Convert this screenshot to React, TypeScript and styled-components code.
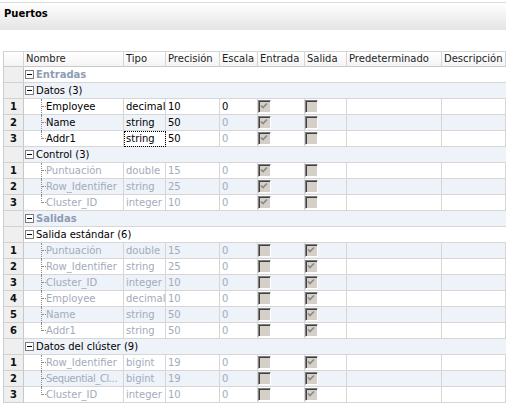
import React from 'react';
import styled, { createGlobalStyle } from 'styled-components';

const GlobalStyle = createGlobalStyle`
  html, body {
    margin: 0;
    padding: 0;
    background: #ffffff;
  }
  body {
    font-family: "DejaVu Sans", Verdana, sans-serif;
    font-size: 10px;
    color: #000;
    overflow: hidden;
  }
`;

const COLUMNS = '20px 100px 42px 54px 38px 47px 42px 95px 1fr';

const Panel = styled.div`
  width: 506px;
  height: 405px;
  overflow: hidden;
`;

const TitleBar = styled.div`
  margin-top: 2px;
  height: 28px;
  border-top: 1px solid #dcdcdc;
  background: linear-gradient(#ffffff, #e4e4e4);
  padding: 5px 0 0 4px;
  box-sizing: border-box;
`;

const Title = styled.div`
  font-weight: bold;
  line-height: 12px;
  color: #000;
`;

const Grid = styled.div`
  margin: 21px 0 0 3px;
  border-top: 1px solid #d6d6d6;
  border-left: 1px solid #cfcfcf;
`;

const HeaderRow = styled.div`
  display: grid;
  grid-template-columns: ${COLUMNS};
  height: 15px;
  background: linear-gradient(#ffffff, #f3f3f3);
`;

const HeaderCell = styled.div`
  height: 15px;
  box-sizing: border-box;
  border-right: 1px solid #d5d5d5;
  border-bottom: 1px solid #c9c9c9;
  padding-left: 2px;
  line-height: 14px;
  color: #1e1e1e;
  white-space: nowrap;
  overflow: hidden;
`;

const Row = styled.div<{ $alt: boolean }>`
  display: grid;
  grid-template-columns: ${COLUMNS};
  height: 16px;
  background: ${(p) => (p.$alt ? '#eef2f9' : '#ffffff')};
`;

const NumCell = styled.div`
  height: 16px;
  box-sizing: border-box;
  border-right: 1px solid #c8c8c8;
  border-bottom: 1px solid #d0d0d0;
  background: #efefef;
  text-align: center;
  font-weight: bold;
  line-height: 15px;
  color: #111;
`;

const Cell = styled.div<{ $muted?: boolean; $focus?: boolean }>`
  height: 16px;
  box-sizing: border-box;
  border-right: 1px solid #d6d6d6;
  border-bottom: 1px solid #d6d6d6;
  padding-left: 2px;
  line-height: 15px;
  white-space: nowrap;
  overflow: hidden;
  color: ${(p) => (p.$muted ? '#a3abb9' : '#000')};
  outline: ${(p) => (p.$focus ? '1px dotted #000' : 'none')};
  outline-offset: -1px;
`;

const TreeCell = styled.div<{ $muted?: boolean }>`
  display: flex;
  height: 16px;
  box-sizing: border-box;
  border-right: 1px solid #d6d6d6;
  border-bottom: 1px solid #d6d6d6;
  line-height: 15px;
  color: ${(p) => (p.$muted ? '#a3abb9' : '#000')};
  min-width: 0;
`;

const Connector = styled.span<{ $last: boolean }>`
  position: relative;
  flex: 0 0 22px;

  &::before {
    content: '';
    position: absolute;
    left: 17px;
    top: 0;
    height: ${(p) => (p.$last ? '8px' : '16px')};
    border-left: 1px dotted #8a8a8a;
  }

  &::after {
    content: '';
    position: absolute;
    left: 18px;
    top: 7px;
    width: 4px;
    border-top: 1px dotted #8a8a8a;
  }
`;

const NameText = styled.span<{ $tight?: boolean }>`
  flex: 1;
  min-width: 0;
  white-space: nowrap;
  overflow: hidden;
  letter-spacing: ${(p) => (p.$tight ? '-0.4px' : 'normal')};
`;

const GroupCell = styled.div<{ $section?: boolean }>`
  grid-column: 2 / -1;
  display: flex;
  align-items: center;
  gap: 2px;
  height: 16px;
  box-sizing: border-box;
  border-bottom: 1px solid #d6d6d6;
  padding-left: 1px;
  line-height: 15px;
  font-weight: ${(p) => (p.$section ? 'bold' : 'normal')};
  color: ${(p) => (p.$section ? '#8e9bb4' : '#000')};
`;

const Expander = styled.span`
  position: relative;
  flex: 0 0 auto;
  width: 9px;
  height: 9px;
  box-sizing: border-box;
  border: 1px solid #7c7c7c;
  background: #fff;
  margin-bottom: 1px;

  &::after {
    content: '';
    position: absolute;
    left: 1px;
    top: 3px;
    width: 5px;
    height: 1px;
    background: #000;
  }
`;

const CheckCell = styled.div`
  display: flex;
  align-items: flex-start;
  height: 16px;
  box-sizing: border-box;
  border-right: 1px solid #d6d6d6;
  border-bottom: 1px solid #d6d6d6;
`;

const Box = styled.span`
  display: block;
  width: 13px;
  height: 13px;
  margin-top: 1px;
  box-sizing: border-box;
  border: 1px solid;
  border-color: #808080 #ffffff #ffffff #808080;
  box-shadow: inset 1px 1px #404040, inset -1px -1px #d4d0c8;
  background: #d4d0c8;
`;

const Check: React.FC<{ on: boolean }> = ({ on }) => (
  <Box>
    {on && (
      <svg width="11" height="11" viewBox="0 0 11 11">
        <polyline points="2,4.5 4,6.5 8,2.5" fill="none" stroke="#8a8a8a" strokeWidth="1.7" />
      </svg>
    )}
  </Box>
);

type Port = {
  name: string;
  type: string;
  prec: string;
  scale: string;
  input: boolean;
  output: boolean;
  muted: boolean;
  scaleMuted?: boolean;
  focusType?: boolean;
  tight?: boolean;
};

type Group = { label: string; ports: Port[] };
type Section = { title: string; groups: Group[] };

const p = (
  name: string,
  type: string,
  prec: string,
  input: boolean,
  output: boolean,
  muted: boolean,
  extra: Partial<Port> = {}
): Port => ({ name, type, prec, scale: '0', input, output, muted, ...extra });

const sections: Section[] = [
  {
    title: 'Entradas',
    groups: [
      {
        label: 'Datos (3)',
        ports: [
          p('Employee', 'decimal', '10', true, false, false),
          p('Name', 'string', '50', true, false, false, { scaleMuted: true }),
          p('Addr1', 'string', '50', true, false, false, { scaleMuted: true, focusType: true }),
        ],
      },
      {
        label: 'Control (3)',
        ports: [
          p('Puntuación', 'double', '15', true, false, true),
          p('Row_Identifier', 'string', '25', true, false, true),
          p('Cluster_ID', 'integer', '10', true, false, true),
        ],
      },
    ],
  },
  {
    title: 'Salidas',
    groups: [
      {
        label: 'Salida estándar (6)',
        ports: [
          p('Puntuación', 'double', '15', false, true, true),
          p('Row_Identifier', 'string', '25', false, true, true),
          p('Cluster_ID', 'integer', '10', false, true, true),
          p('Employee', 'decimal', '10', false, true, true),
          p('Name', 'string', '50', false, true, true),
          p('Addr1', 'string', '50', false, true, true),
        ],
      },
      {
        label: 'Datos del clúster (9)',
        ports: [
          p('Row_Identifier', 'bigint', '19', false, true, true),
          p('Sequential_Cl...', 'bigint', '19', false, true, true, { tight: true }),
          p('Cluster_ID', 'integer', '10', false, true, true),
        ],
      },
    ],
  },
];

const headers = ['', 'Nombre', 'Tipo', 'Precisión', 'Escala', 'Entrada', 'Salida', 'Predeterminado', 'Descripción'];

const App: React.FC = () => {
  const rows: React.ReactNode[] = [];
  let i = 0;

  sections.forEach((section) => {
    rows.push(
      <Row key={`s-${i}`} $alt={i % 2 === 1}>
        <NumCell />
        <GroupCell $section>
          <Expander />
          {section.title}
        </GroupCell>
      </Row>
    );
    i++;
    section.groups.forEach((group) => {
      rows.push(
        <Row key={`g-${i}`} $alt={i % 2 === 1}>
          <NumCell />
          <GroupCell>
            <Expander />
            {group.label}
          </GroupCell>
        </Row>
      );
      i++;
      group.ports.forEach((port, n) => {
        rows.push(
          <Row key={`r-${i}`} $alt={i % 2 === 1}>
            <NumCell>{n + 1}</NumCell>
            <TreeCell $muted={port.muted}>
              <Connector $last={n === group.ports.length - 1} />
              <NameText $tight={port.tight}>{port.name}</NameText>
            </TreeCell>
            <Cell $muted={port.muted} $focus={port.focusType}>
              {port.type}
            </Cell>
            <Cell $muted={port.muted}>{port.prec}</Cell>
            <Cell $muted={port.muted || port.scaleMuted}>{port.scale}</Cell>
            <CheckCell>
              <Check on={port.input} />
            </CheckCell>
            <CheckCell>
              <Check on={port.output} />
            </CheckCell>
            <Cell />
            <Cell />
          </Row>
        );
        i++;
      });
    });
  });

  return (
    <>
      <GlobalStyle />
      <Panel>
        <TitleBar>
          <Title>Puertos</Title>
        </TitleBar>
        <Grid>
          <HeaderRow>
            {headers.map((h, k) => (
              <HeaderCell key={k}>{h}</HeaderCell>
            ))}
          </HeaderRow>
          {rows}
        </Grid>
      </Panel>
    </>
  );
};

export default App;
